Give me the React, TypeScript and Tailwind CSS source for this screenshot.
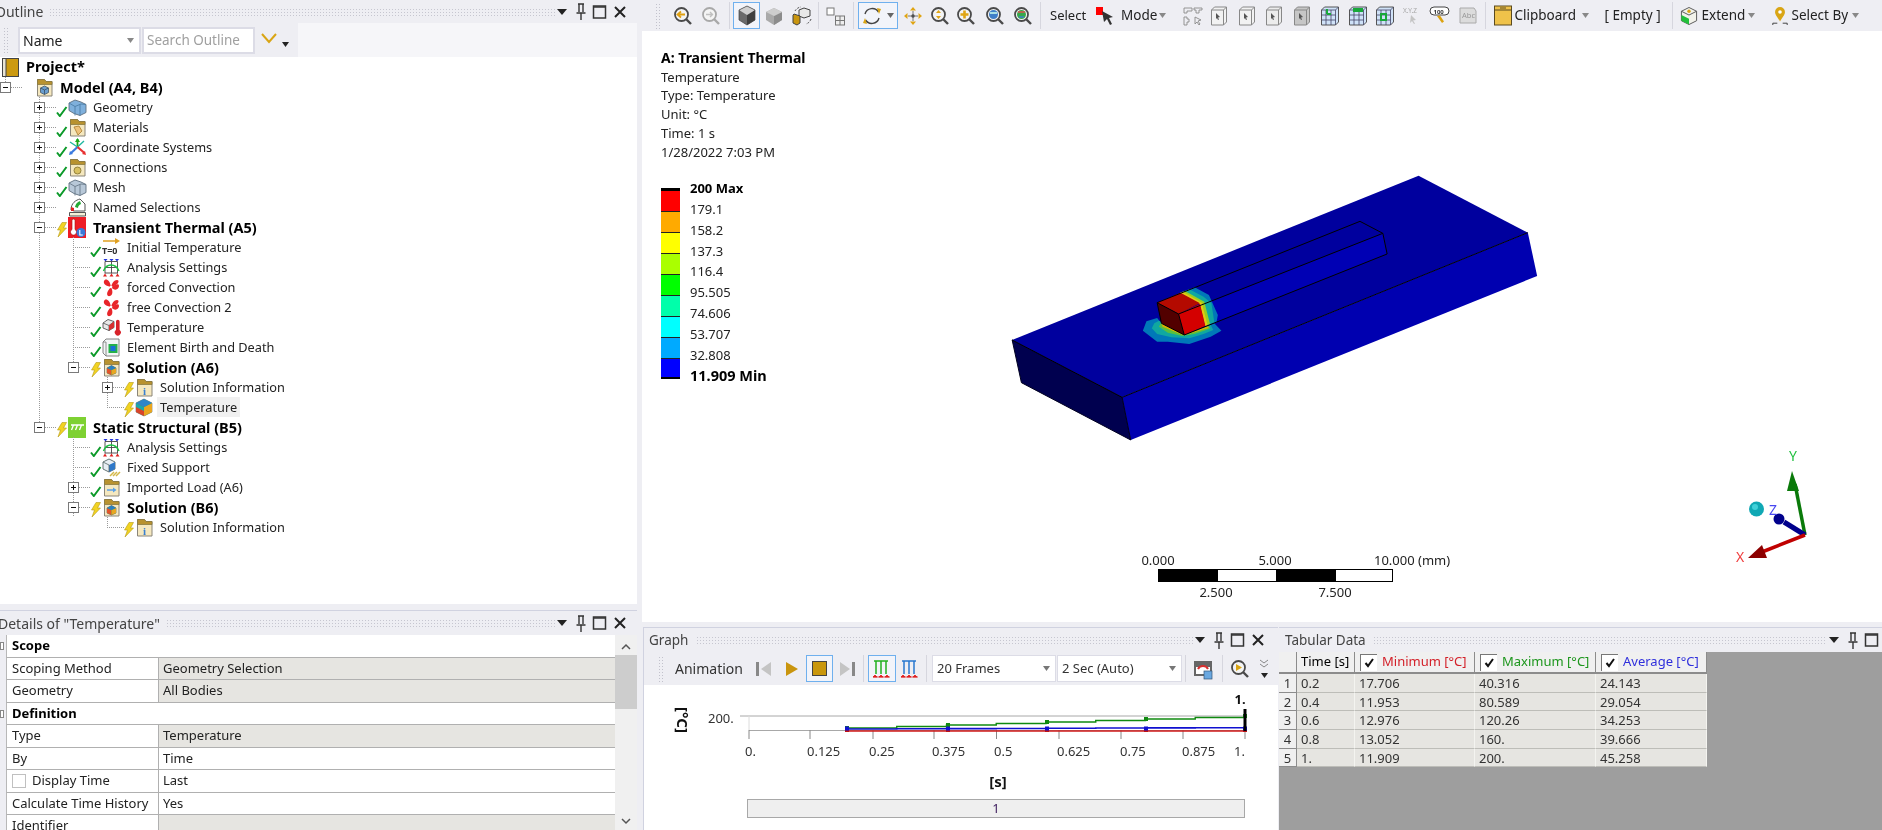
import React from "react";

type N = React.ReactNode;
const S = ({ w = 19, h = 19, children }: { w?: number; h?: number; children?: N }) => (
  <svg width={w} height={h} viewBox={`0 0 ${w} ${h}`} className="shrink-0 block">{children}</svg>
);

/* ---------- tree icons ---------- */
const Folder = ({ children }: { children?: N }) => (
  <S>
    <path d="M2.5 1.5h7l1.5 2h6v14.5h-14.5z" fill="#f5e8bf" stroke="#8a8578" strokeWidth="1" />
    <path d="M2.5 1.5h7l1.5 2h6v3h-14.5z" fill="#b8922f" stroke="#8a7a40" strokeWidth="0.8" />
    {children}
  </S>
);
const MiniCube = ({ c = "#6a9ecf" }: { c?: string }) => (
  <g>
    <path d="M5.5 10l4-2 4 2v4.5l-4 2-4-2z" fill={c} stroke="#456" strokeWidth="0.8" />
    <path d="M5.5 10l4 2 4-2M9.5 12v4.5" fill="none" stroke="#345" strokeWidth="0.7" />
  </g>
);
const SolCube = () => (
  <g>
    <path d="M5 10l4.5-2.5 4.5 2.5v5l-4.5 2-4.5-2z" fill="#2aa860" stroke="#555" strokeWidth="0.6" />
    <path d="M5 10l4.5 2v5l-4.5-2z" fill="#e2542a" />
    <path d="M9.5 12l4.5-2v5l-4.5 2z" fill="#e8a720" />
    <path d="M5 10l4.5-2.5 4.5 2.5-4.5 2z" fill="#2c7fc0" />
  </g>
);
const GeoCube = ({ c = "#7fb0dc", d = "#4d7fa8" }: { c?: string; d?: string }) => (
  <S>
    <path d="M1 5l6-3 6 2 5 2.500v8l-6 3-6-2-5-3z" fill={c} stroke="#5f6f7f" strokeWidth="0.9" />
    <path d="M1 5l6 3.500 6-2.500 5 .5M7 8.500v9M12 6.500v11" fill="none" stroke={d} strokeWidth="0.9" />
  </S>
);
const Grid = () => (
  <S>
    <path d="M1.500 1l2 2.500 2-2.500zM7.500 1l2 2.500 2-2.500zM13 1l2 2.500 2-2.500z" fill="#2233dd" />
    <path d="M3 3.500v12M9.500 3.500v12M15.500 3.500v12M3 3.500h12.500M3 9.500h12.500M3 15h12.500" stroke="#444" strokeWidth="0.9" fill="none" />
    <path d="M1.500 13c3-8 12-8 15.500 0" stroke="#18c040" strokeWidth="1.400" fill="none" />
    <path d="M1 18.500l2-3 2 3zM7.500 18.500l2-3 2 3zM13.500 18.500l2-3 2 3z" fill="#e02020" />
  </S>
);
const Fan = () => (
  <S>
    <path d="M9 9C4 8 1 6 2 3s6-2 7 6zM9 9c5-3 8-4 8-1s-4 6-8 1zM9 9c2 4 2 8-1 9s-5-3 1-9z" fill="#e8262a" />
    <path d="M9 9c1-4 3-7 6-7s2 5-6 7z" fill="#e8262a" />
    <circle cx="9" cy="9" r="1.300" fill="#fff" />
  </S>
);
const Tree: Record<string, () => N> = {
  model: () => <Folder><MiniCube /></Folder>,
  geo: () => <GeoCube />,
  mat: () => <Folder><path d="M6 9l5-1 3 5-4 4z" fill="#eec27a" stroke="#a87a2a" strokeWidth="0.8" /></Folder>,
  cs: () => (
    <S>
      <path d="M9.500 9V1" stroke="#1aa81a" strokeWidth="1.800" />
      <path d="M7 4l2.500-4L12 4z" fill="#1aa81a" />
      <path d="M9.500 9L2 4M9.500 9L16 3" stroke="#20b8a0" strokeWidth="1.400" />
      <path d="M9.500 9L3 15" stroke="#3a7ae0" strokeWidth="2.200" />
      <path d="M9.500 9l7 6" stroke="#e83030" strokeWidth="2.200" />
      <path d="M1 17l4-1-3-3z" fill="#3a7ae0" />
      <path d="M18 17l-4-1 3-3z" fill="#e83030" />
    </S>
  ),
  conn: () => <Folder><circle cx="9.500" cy="12.500" r="3.500" fill="#d8c060" stroke="#807030" strokeWidth="0.8" /></Folder>,
  mesh: () => <GeoCube c="#b8c8d8" d="#6a7a8a" />,
  named: () => (
    <S>
      <path d="M3 12C3 5 8 2 12 1l5 5v7H6z" fill="#fff" stroke="#555" strokeWidth="1" />
      <path d="M7 9c1-4 3-5 5-6l1 3c-2 1-3 2-3 4z" fill="#22aa33" />
      <path d="M3 9l3 1v3H3z" fill="#e02020" />
      <path d="M1.500 14.500h16v3.500h-16z" fill="#f4f0d8" stroke="#555" strokeWidth="1" />
    </S>
  ),
  thermal: () => (
    <S w={18} h={21}>
      <rect width="18" height="21" fill="#ee1c25" />
      <path d="M4 3.500a1.500 1.500 0 013 0v9a3 3 0 11-3 0z" fill="#fff" stroke="#a01010" strokeWidth="0.6" />
      <circle cx="13" cy="15.500" r="4.500" fill="#3a78d8" />
      <path d="M11.800 13v5h3" stroke="#fff" strokeWidth="1.100" fill="none" />
    </S>
  ),
  init: () => (
    <S>
      <path d="M1 3h14" stroke="#e0a020" strokeWidth="1.500" />
      <path d="M13 0l5 3-5 3z" fill="#e0a020" />
      <text x="0" y="16" fontSize="9" fontWeight="700" fill="#333">T=0</text>
    </S>
  ),
  grid: () => <Grid />,
  fan: () => <Fan />,
  tload: () => (
    <S>
      <path d="M1 5l5-3.500 6 2v6l-5 3-6-2.500z" fill="#e8e8e8" stroke="#555" strokeWidth="0.9" />
      <path d="M1 5l6 2.500 5-4M7 7.500v5.500" fill="none" stroke="#555" strokeWidth="0.8" />
      <path d="M7 7.500l5-4v6l-5 3z" fill="#d83030" />
      <path d="M14 3.500a1.800 1.800 0 013.600 0v8.500a3 3 0 11-3.600 0z" fill="#d8232a" />
    </S>
  ),
  ebd: () => (
    <S>
      <path d="M1 4l3-3h13v17H4L1 15z" fill="#f2f6f6" stroke="#777" strokeWidth="0.9" />
      <path d="M4 4V18M1 4h3" stroke="#777" strokeWidth="0.8" />
      <rect x="6.500" y="6" width="9" height="9" fill="#25b04a" />
      <rect x="8.500" y="8" width="5" height="5" fill="#1a70d8" />
    </S>
  ),
  sol: () => <Folder><SolCube /></Folder>,
  info: () => (
    <Folder>
      <text x="9.500" y="16.500" textAnchor="middle" fontSize="11" fontWeight="700" fontFamily="Liberation Serif, serif" fill="#3a80d0">i</text>
    </Folder>
  ),
  res: () => (
    <S>
      <path d="M1 5l8-4 8 4v9l-8 4-8-4z" fill="#2aa860" stroke="#666" strokeWidth="0.6" />
      <path d="M1 5l8 4v9l-8-4z" fill="#d8442a" />
      <path d="M1 5l8 4 0 4-8-4z" fill="#1aa8a8" />
      <path d="M9 9l8-4v9l-8 4z" fill="#eaa61e" />
      <path d="M1 5l8-4 8 4-8 4z" fill="#2f85c8" />
    </S>
  ),
  static: () => (
    <S w={18} h={21}>
      <rect width="18" height="21" fill="#7ed132" />
      <path d="M3 8h13M5.500 8l-2 5M9.500 8l-2 5M13.500 8l-2 5" stroke="#fff" strokeWidth="1.300" fill="none" />
    </S>
  ),
  fixed: () => (
    <S>
      <path d="M1 4l6-3 6 3v7l-6 3-6-3z" fill="#e8eef4" stroke="#566" strokeWidth="0.9" />
      <path d="M7 7l6-3v7l-6 3z" fill="#2f78c8" />
      <path d="M1 4l6 3v7" fill="none" stroke="#566" strokeWidth="0.8" />
      <path d="M8 18l4-4M11 18l4-4M14 18l4-4" stroke="#d4b848" strokeWidth="1.500" />
    </S>
  ),
  imp: () => <Folder><path d="M5 12h7" stroke="#5aa0e8" strokeWidth="1.500" /><path d="M11 9.500l3.500 2.500-3.500 2.500z" fill="#5aa0e8" /></Folder>,
};

const Check = () => (
  <svg width="12" height="20" viewBox="0 0 12 20" className="shrink-0 block">
    <path d="M1 15.500l2.800 3.500L10.500 10" fill="none" stroke="#0c9a2a" strokeWidth="2" />
  </svg>
);
const Bolt = () => (
  <svg width="12" height="20" viewBox="0 0 12 20" className="shrink-0 block">
    <path d="M6 5.500h4.500L7.500 11h3L2 20l2.500-7H1.500z" fill="#f2d322" stroke="#b59a18" strokeWidth="0.6" />
  </svg>
);

type RowD = {
  t: string; l: 1 | 2 | 3 | 4; b?: boolean; ex?: "+" | "-"; st?: "c" | "b"; ic: string;
  v: [number, number, number][]; hl?: boolean;
};
const F = 20; const H = 10;
const rows: RowD[] = [
  { t: "Model (A4, B4)", l: 1, b: true, ex: "-", ic: "model", v: [] },
  { t: "Geometry", l: 2, ex: "+", st: "c", ic: "geo", v: [[39, 0, F]] },
  { t: "Materials", l: 2, ex: "+", st: "c", ic: "model2", v: [[39, 0, F]] },
  { t: "Coordinate Systems", l: 2, ex: "+", st: "c", ic: "cs", v: [[39, 0, F]] },
  { t: "Connections", l: 2, ex: "+", st: "c", ic: "conn", v: [[39, 0, F]] },
  { t: "Mesh", l: 2, ex: "+", st: "c", ic: "mesh", v: [[39, 0, F]] },
  { t: "Named Selections", l: 2, ex: "+", ic: "named", v: [[39, 0, F]] },
  { t: "Transient Thermal (A5)", l: 2, b: true, ex: "-", st: "b", ic: "thermal", v: [[39, 0, F]] },
  { t: "Initial Temperature", l: 3, st: "c", ic: "init", v: [[39, 0, F], [73, 0, F]] },
  { t: "Analysis Settings", l: 3, st: "c", ic: "grid", v: [[39, 0, F], [73, 0, F]] },
  { t: "forced Convection", l: 3, st: "c", ic: "fan", v: [[39, 0, F], [73, 0, F]] },
  { t: "free Convection 2", l: 3, st: "c", ic: "fan", v: [[39, 0, F], [73, 0, F]] },
  { t: "Temperature", l: 3, st: "c", ic: "tload", v: [[39, 0, F], [73, 0, F]] },
  { t: "Element Birth and Death", l: 3, st: "c", ic: "ebd", v: [[39, 0, F], [73, 0, F]] },
  { t: "Solution (A6)", l: 3, b: true, ex: "-", st: "b", ic: "sol", v: [[39, 0, F], [73, 0, H]] },
  { t: "Solution Information", l: 4, ex: "+", st: "b", ic: "info", v: [[39, 0, F], [107, 0, F]] },
  { t: "Temperature", l: 4, st: "b", ic: "res", hl: true, v: [[39, 0, F], [107, 0, H]] },
  { t: "Static Structural (B5)", l: 2, b: true, ex: "-", st: "b", ic: "static", v: [[39, 0, H]] },
  { t: "Analysis Settings", l: 3, st: "c", ic: "grid", v: [[73, 0, F]] },
  { t: "Fixed Support", l: 3, st: "c", ic: "fixed", v: [[73, 0, F]] },
  { t: "Imported Load (A6)", l: 3, ex: "+", st: "c", ic: "imp", v: [[73, 0, F]] },
  { t: "Solution (B6)", l: 3, b: true, ex: "-", st: "b", ic: "sol", v: [[73, 0, F]] },
  { t: "Solution Information", l: 4, st: "b", ic: "info", v: [[107, 0, H]] },
];
const expX = { 1: 5, 2: 39, 3: 73, 4: 107 } as const;

const TreeRow = ({ r, idx }: { r: RowD; idx: number }) => {
  const x = expX[r.l];
  const pad = { 1: "pl-[23px]", 2: "pl-[56px]", 3: "pl-[90px]", 4: "pl-[123px]" }[r.l];
  const Icon = r.ic === "model2" ? Tree.mat : Tree[r.ic];
  return (
    <div className={`relative h-5 flex items-center ${pad}`} data-i={idx}>
      <svg width="200" height="20" className="absolute left-0 top-0" viewBox="0 0 200 20">
        {r.v.map(([vx, a, b], i) => (
          <line key={i} x1={vx + 0.5} x2={vx + 0.5} y1={a} y2={b} stroke="#9a9a9a" strokeDasharray="1 1" />
        ))}
        {r.l === 1 && <line x1={5.5} x2={5.5} y1={0} y2={10} stroke="#9a9a9a" strokeDasharray="1 1" />}
        <line x1={x} x2={x + 18} y1={10.5} y2={10.5} stroke="#9a9a9a" strokeDasharray="1 1" />
        {r.ex && (
          <g>
            <rect x={x - 4.5} y={5.5} width={10} height={10} fill="#fff" stroke="#7a7a7a" />
            <line x1={x - 2} x2={x + 3} y1={10.5} y2={10.5} stroke="#111" />
            {r.ex === "+" && <line x1={x + 0.5} x2={x + 0.5} y1={8} y2={13} stroke="#111" />}
          </g>
        )}
      </svg>
      <div className="relative w-[12px] shrink-0">{r.st === "c" ? <Check /> : r.st === "b" ? <Bolt /> : null}</div>
      <div className="relative shrink-0 w-[19px]">{Icon()}</div>
      <span
        className={`relative ml-[3px] pl-[3px] pr-[3px] h-5 leading-5 whitespace-nowrap ${r.b ? "text-[14.500px] font-bold text-black" : "text-[12.750px] text-[#222]"} ${r.hl ? "bg-[#f0f0f0]" : ""}`}
      >
        {r.t}
      </span>
    </div>
  );
};

/* ---------- panel chrome ---------- */
const GripH = ({ className }: { className: string }) => (
  <div className={`h-[8px] bg-[radial-gradient(#c6c6d0_0.8px,transparent_0.9px)] bg-[length:3px_3px] ${className}`} />
);
const GripV = ({ className = "" }: { className?: string }) => (
  <div className={`w-[6px] h-[26px] shrink-0 bg-[radial-gradient(#c2c2cc_0.8px,transparent_0.9px)] bg-[length:3px_3px] ${className}`} />
);
const Ctl = ({ clip = false }: { clip?: boolean }) => (
  <div className="flex items-center shrink-0">
    <svg width="12" height="8" viewBox="0 0 12 8"><path d="M1 1h10L6 7z" fill="#222" /></svg>
    <svg className="ml-[6px]" width="14" height="17" viewBox="0 0 14 17"><path d="M4 1h6M5 1v8M9 1v8M2.500 10h9M7 10v7" stroke="#333" strokeWidth="1.400" fill="none" /></svg>
    <svg className="ml-[4px]" width="16" height="16" viewBox="0 0 16 16"><rect x="1.500" y="2" width="12" height="12" fill="none" stroke="#333" strokeWidth="1.500" /><path d="M1.500 3h12" stroke="#333" strokeWidth="1.500" /></svg>
    {!clip && <svg className="ml-[5px]" width="14" height="14" viewBox="0 0 14 14"><path d="M2 2l10 10M12 2L2 12" stroke="#222" strokeWidth="2" /></svg>}
  </div>
);
const Arrow = ({ className = "", c = "#666" }: { className?: string; c?: string }) => (
  <svg className={`shrink-0 ${className}`} width="7" height="5" viewBox="0 0 7 5"><path d="M0 0h7L3.500 5z" fill={c} /></svg>
);

/* ---------- toolbar icons ---------- */
const Mag = ({ dis, children }: { dis?: boolean; children?: N }) => (
  <svg width="20" height="20" viewBox="0 0 20 20" className="block">
    <circle cx="8.500" cy="8.500" r="6.500" fill="#f4f4f4" stroke={dis ? "#a8a8a8" : "#4a4a4a"} strokeWidth="1.800" />
    <path d="M13 13l5 5" stroke={dis ? "#a8a8a8" : "#4a4a4a"} strokeWidth="2.400" />
    {children}
  </svg>
);
const T = ({ w, className = "", children }: { w: string; className?: string; children?: N }) => (
  <div className={`flex items-center justify-center shrink-0 h-[26px] ${w} ${className}`}>{children}</div>
);
const Sep = ({ className = "" }: { className?: string }) => <div className={`w-px h-[27px] shrink-0 bg-[#d6d6de] ${className}`} />;
const Iso = ({ c = "#8a8a8a", dark = "#5a5a5a" }: { c?: string; dark?: string }) => (
  <svg width="20" height="21" viewBox="0 0 20 21" className="block">
    <path d="M10 1l8 4v10l-8 5-8-5V5z" fill={c} />
    <path d="M10 10l8-5v10l-8 5z" fill={dark} />
    <path d="M2 5l8 5 8-5-8-4z" fill="#cfcfcf" />
    <path d="M10 1l8 4v10l-8 5-8-5V5z" fill="none" stroke="#444" strokeWidth="0.7" />
  </svg>
);
const BoxCur = ({ f = "#f2f2f2" }: { f?: string }) => (
  <svg width="20" height="20" viewBox="0 0 20 20" className="block">
    <path d="M1.500 4l3-3h12v15l-3 3H1.500z" fill={f} stroke="#888" />
    <path d="M1.500 4h12v15M13.500 4l3-3" fill="none" stroke="#888" />
    <path d="M6 7l4 4-2 .5 1 2-1 .5-1-2-1 1z" fill="#555" />
  </svg>
);
const GridBox = ({ g }: { g: string }) => (
  <svg width="20" height="20" viewBox="0 0 20 20" className="block">
    <path d="M1.500 4l3-3h14v15l-3 3H1.500z" fill="#cfe2f8" stroke="#555" />
    <path d="M1.500 4h14v15M15.500 4l3-3M6 4v15M11 4v15M1.500 9h14M1.500 14h14" fill="none" stroke="#446" strokeWidth="0.8" />
    <path d={g} fill="none" stroke="#18a83a" strokeWidth="2" />
  </svg>
);
const Sel1 = () => (
  <svg width="20" height="20" viewBox="0 0 20 20" className="block">
    <g fill="none" stroke="#8a8a8a" strokeWidth="0.9">
      <path d="M1 2h8v3H4v2H1zM11 2h8v2h-3v3h-3V4h-2zM1 11h3v2h2v3H4v3H1zM12 11l6 3-3 1 2 3-1 1-2-3-2 2z" />
    </g>
  </svg>
);

const TopBar = () => (
  <div className="h-[31px] flex items-center bg-[#eeeef3] text-[13px] text-[#222] whitespace-nowrap pl-[13px]">
    <GripV />
    <T w="w-[28px]" className="ml-[8px]">
      <Mag><path d="M12 8.500H5M8 5.500l-3.500 3 3.500 3" stroke="#e0a010" strokeWidth="1.800" fill="none" /></Mag>
    </T>
    <T w="w-[28px]"><Mag dis><path d="M5 8.500h6M9 6l2.500 2.500L9 11" stroke="#c0c0c0" strokeWidth="1.400" fill="none" /></Mag></T>
    <Sep className="ml-[4px]" />
    <T w="w-[27px]" className="ml-[3px] border-[1.500px] border-[#6fb0ee] bg-[#f2f4fa] !h-[27px]"><Iso c="#6a6a6a" dark="#3f3f3f" /></T>
    <T w="w-[28px]"><svg width="18" height="18" viewBox="0 0 18 18"><path d="M9 1l8 4v8l-8 5-8-5V5z" fill="#a9a9a9" /><path d="M9 9l8-4v8l-8 5z" fill="#8c8c8c" /><path d="M1 5l8 4 8-4-8-4z" fill="#cdcdcd" /></svg></T>
    <T w="w-[28px]">
      <svg width="20" height="20" viewBox="0 0 20 20">
        <path d="M12 2l6 2v6l-6 2-5-2V4z" fill="#e8e8e8" stroke="#444" />
        <path d="M2 8l6 2v7l-3 2-4-2V9z" fill="#c9950e" stroke="#444" />
        <path d="M3 5A8 8 0 019 1M19 13a8 8 0 01-5 5" stroke="#444" fill="none" strokeDasharray="2 1.500" />
      </svg>
    </T>
    <Sep className="ml-[2px]" />
    <T w="w-[28px]" className="ml-[3px]">
      <svg width="20" height="20" viewBox="0 0 20 20">
        <rect x="1" y="2" width="7" height="7" fill="#fff" stroke="#777" />
        <rect x="9.500" y="10" width="9" height="9" fill="#eee" stroke="#777" />
        <path d="M14 10v9M9.500 14.500h9" stroke="#777" />
      </svg>
    </T>
    <Sep className="ml-[3px]" />
    <T w="w-[40px]" className="ml-[4px] border-[1.500px] border-[#6fb0ee] bg-[#f2f4fa] !h-[27px] justify-start pl-[3px]">
      <svg width="20" height="20" viewBox="0 0 20 20">
        <path d="M3 8A7.500 7.500 0 0116.500 6M17 12A7.500 7.500 0 013.500 14" fill="none" stroke="#444" strokeWidth="1.400" />
        <path d="M15 2l4 1-2 5zM5 18l-4-1 2-5z" fill="#d9a514" />
      </svg>
      <Arrow className="ml-[5px]" />
    </T>
    <T w="w-[26px]" className="ml-[2px]">
      <svg width="20" height="20" viewBox="0 0 20 20">
        <path d="M10 1l3 3.500H7zM10 19l3-3.500H7zM1 10l3.500-3v6zM19 10l-3.500-3v6z" fill="#e0a514" />
        <circle cx="10" cy="10" r="1.700" fill="#444" />
        <path d="M10 5v10M5 10h10" stroke="#555" strokeWidth="0.8" />
      </svg>
    </T>
    <T w="w-[26px]" className="ml-px"><Mag><path d="M8.500 4l2.500 3H6zM8.500 13L6 10h5z" fill="#e0a514" /></Mag></T>
    <T w="w-[26px]"><Mag><path d="M8.500 4.500v8M4.500 8.500h8" stroke="#e0a514" strokeWidth="2.600" /></Mag></T>
    <T w="w-[28px]" className="ml-[2px]"><Mag><circle cx="8.500" cy="8.500" r="4.500" fill="#3f7fc8" /><path d="M5 7h7" stroke="#cfe" strokeWidth="1.500" /></Mag></T>
    <T w="w-[28px]"><Mag><circle cx="8.500" cy="8.500" r="4.500" fill="#36a84a" /><path d="M5 6h7" stroke="#e05050" strokeWidth="1.500" /><path d="M6 11h5" stroke="#3f7fc8" strokeWidth="1.500" /></Mag></T>
    <Sep className="ml-[3px]" />
    <span className="ml-[9px] w-[38px]">Select</span>
    <T w="w-[24px]" className="ml-[6px]">
      <svg width="22" height="22" viewBox="0 0 22 22">
        <rect x="1" y="2" width="7" height="8" fill="#f00" />
        <path d="M7 6l11 6-4 1 3 6-2 1-3-6-3 3z" fill="#333" />
      </svg>
    </T>
    <span className="ml-[3px] w-[37px] text-[13.500px]">Mode</span>
    <Arrow className="ml-[1px]" c="#888" />
    <T w="w-[27.500px]" className="ml-[13px]"><Sel1 /></T>
    <T w="w-[27.500px]"><BoxCur /></T>
    <T w="w-[27.500px]"><BoxCur /></T>
    <T w="w-[27.500px]"><BoxCur f="#ececec" /></T>
    <T w="w-[27.500px]"><BoxCur f="#c6c6c6" /></T>
    <T w="w-[27.500px]"><GridBox g="M7 3v5M7 8h4" /></T>
    <T w="w-[27.500px]"><GridBox g="M5 3h10M5 5h10" /></T>
    <T w="w-[27.500px]"><GridBox g="M6 8h5v6H6z" /></T>
    <T w="w-[27.500px]">
      <svg width="22" height="20" viewBox="0 0 22 20">
        <text x="1" y="7" fontSize="6.500" fill="#a8a8a8">X.Y.Z</text>
        <path d="M9 9l5 5-3 .5 2 3-1 .5-2-3-2 2z" fill="#c4c4c4" />
      </svg>
    </T>
    <T w="w-[27.500px]">
      <svg width="22" height="20" viewBox="0 0 22 20">
        <rect x="1" y="1" width="19" height="8" rx="4" fill="#fff" stroke="#444" />
        <text x="4.500" y="7.500" fontSize="6" fontWeight="700" fill="#333">100</text>
        <path d="M8 10l5 7 2-1.500-4-6z" fill="#dca20f" />
      </svg>
    </T>
    <T w="w-[27.500px]">
      <svg width="20" height="20" viewBox="0 0 20 20">
        <path d="M2 2h14l2 3v12H2z" fill="#dcdcdc" stroke="#aaa" />
        <text x="4" y="12" fontSize="7.500" fill="#999">Abc</text>
      </svg>
    </T>
    <Sep className="ml-[3px]" />
    <T w="w-[18px]" className="ml-[8px]">
      <svg width="18" height="21" viewBox="0 0 18 21">
        <rect x="0.500" y="1" width="17" height="19" fill="#efc24a" stroke="#5a4a20" />
        <path d="M0.500 5h17M6 3h6" stroke="#5a4a20" />
      </svg>
    </T>
    <span className="ml-[3px] w-[64px] text-[13.500px]">Clipboard</span>
    <Arrow className="ml-[3px]" c="#888" />
    <span className="ml-[16px] w-[59px] text-[13.500px]">[ Empty ]</span>
    <Sep className="ml-[8px]" />
    <T w="w-[18px]" className="ml-[7px]">
      <svg width="19" height="20" viewBox="0 0 19 20">
        <path d="M9.500 1l8 4v10l-8 4-8-4V5z" fill="#f2f2ea" stroke="#555" />
        <path d="M1.500 9l8 4v6l-8-4z" fill="#22c03a" />
        <path d="M1.500 5l8 4 8-4" fill="none" stroke="#555" />
        <circle cx="9.500" cy="5" r="1.800" fill="#d9a514" />
      </svg>
    </T>
    <span className="ml-[4px] w-[43px] text-[13.500px]">Extend</span>
    <Arrow className="ml-[3px]" c="#888" />
    <T w="w-[18px]" className="ml-[16px]">
      <svg width="20" height="22" viewBox="0 0 20 22">
        <path d="M10 1a5.500 5.500 0 015.500 5.500C15.500 10 12 13 10 17c-2-4-5.500-7-5.500-10.500A5.500 5.500 0 0110 1z" fill="#d9a514" />
        <circle cx="10" cy="6.500" r="2" fill="#fff" />
        <path d="M2 21v-2h5M18 21v-2h-5" stroke="#333" fill="none" />
      </svg>
    </T>
    <span className="ml-[3px] w-[58px] text-[13.500px]">Select By</span>
    <Arrow className="ml-[2px]" c="#888" />
  </div>
);

/* ---------- viewport ---------- */
const legend = ["#ff0000", "#ffaa00", "#ffff00", "#aaff00", "#00ff00", "#00ffaa", "#00ffff", "#00aaff", "#0000ff"];
const labels = ["179.1", "158.2", "137.3", "116.4", "95.505", "74.606", "53.707", "32.808"];

const Model3D = () => (
  <svg className="absolute left-0 top-0 block" width="1240" height="591" viewBox="642 31 1240 591">
    <g transform="translate(1000 160) scale(0.35714 0.33333)" strokeLinejoin="round">
      <path d="M34 540L342 712L366 840L60 668Z" fill="#00004f" stroke="#000020" vectorEffect="non-scaling-stroke" />
      <path d="M342 712L1478 218L1504 348L366 840Z" fill="#0000b0" />
      <path d="M34 540L1172 47L1478 218L342 712Z" fill="#00009e" />
      <path d="M34 540L342 712L1478 218" fill="none" stroke="#000" vectorEffect="non-scaling-stroke" />
      <path d="M342 712L366 840" fill="none" stroke="#000020" vectorEffect="non-scaling-stroke" />
      {/* rib */}
      <path d="M500 462L1072 220L1084 282L516 525Z" fill="#0000b4" />
      <path d="M440 428L1008 184L1072 220L500 462Z" fill="#00009e" />
      {/* halo */}
      <path d="M400 512L410 484L440 474L452 490L516 525L600 490L620 512L590 530L530 552L470 545L440 545Z" fill="#0078b8" />
      <path d="M425 505L432 490L445 482L516 525L590 495L597 510L570 522L530 535L480 532L440 522Z" fill="#10a8a0" />
      <path d="M445 500L450 490L516 525L585 497L588 506L545 522L510 528L470 518Z" fill="#58c040" />
      <path d="M455 500L452 490L516 525L582 499L584 504L540 518L510 524Z" fill="#d8b000" />
      {/* bands on rib */}
      <path d="M505 398L545 382L585 405L610 465L606 488L575 498L560 433Z" fill="#0078b8" />
      <path d="M505 398L530 388L570 410L592 430L600 487L575 498L560 433Z" fill="#10a8a0" />
      <path d="M505 398L518 393L572 425L588 492L575 498L560 433Z" fill="#98d020" />
      <path d="M505 398L511 395L565 428L581 495L575 498L560 433Z" fill="#e8c810" />
      {/* hot cube */}
      <path d="M440 428L505 398L560 430L500 462Z" fill="#b40a00" />
      <path d="M440 428L500 462L516 525L452 490Z" fill="#520000" />
      <path d="M500 462L560 432L575 498L516 525Z" fill="#d40000" />
      <path d="M440 428L1008 184L1072 220L500 462ZM500 462L516 525L452 490L440 428M516 525L1084 282L1072 220" fill="none" stroke="#000" vectorEffect="non-scaling-stroke" />
    </g>
    {/* triad */}
    <g>
      <path d="M1805 535L1795 484" stroke="#0a7a0a" strokeWidth="3.500" />
      <path d="M1792 471L1799 491L1787 491Z" fill="#0a7a0a" />
      <path d="M1805 535L1784 522" stroke="#00008c" strokeWidth="5" />
      <circle cx="1779" cy="519" r="5.500" fill="#00008c" />
      <path d="M1805 535L1762 552" stroke="#c00000" strokeWidth="3.500" />
      <path d="M1748 558L1762 545L1767 558Z" fill="#8c0000" />
      <circle cx="1756.500" cy="509" r="7.500" fill="#10a8b4" />
      <circle cx="1755" cy="507" r="3" fill="#40d0d8" />
      <text x="1793" y="461" textAnchor="middle" fontSize="14" fill="#22c040">Y</text>
      <text x="1773" y="515" textAnchor="middle" fontSize="14" fill="#4848f0">Z</text>
      <text x="1740" y="562" textAnchor="middle" fontSize="14" fill="#f04040">X</text>
    </g>
  </svg>
);

const ScaleBar = () => (
  <div className="absolute left-[516px] top-[521px] w-[235px] text-[13px] text-[#222] leading-[17px]">
    <div className="relative h-[17px] whitespace-nowrap">
      <span className="absolute left-0 -translate-x-1/2">0.000</span>
      <span className="absolute left-[117px] -translate-x-1/2">5.000</span>
      <span className="absolute left-[216px]">10.000 (mm)</span>
    </div>
    <div className="flex h-[13px] border border-black">
      <div className="w-[59px] bg-black" />
      <div className="w-[58px] bg-white" />
      <div className="w-[60px] bg-black" />
      <div className="flex-1 bg-white" />
    </div>
    <div className="relative h-[17px] mt-[2px]">
      <span className="absolute left-[58px] -translate-x-1/2">2.500</span>
      <span className="absolute left-[177px] -translate-x-1/2">7.500</span>
    </div>
  </div>
);

const Viewport = () => (
  <div className="relative h-[591px] bg-white overflow-hidden text-[13px] text-[#222] pl-[19px] pt-[18px]">
    <Model3D />
    <div className="relative leading-[18.700px]">
      <div className="font-bold text-black text-[14px]">A: Transient Thermal</div>
      <div>Temperature</div>
      <div>Type: Temperature</div>
      <div>Unit: °C</div>
      <div>Time: 1 s</div>
      <div>1/28/2022 7:03 PM</div>
    </div>
    <div className="relative flex mt-[17px]">
      <div className="w-[19px] mt-[10px] shrink-0">
        <div className="h-[3px] bg-black" />
        {legend.map((c) => (
          <div key={c} className="h-[21px] border-b border-[#222] last:h-[20px] last:border-b-[2px] last:border-black" style={{ background: c }} />
        ))}
      </div>
      <div className="ml-[10px] leading-[20.800px]">
        <div className="font-bold text-black">200 Max</div>
        {labels.map((t) => <div key={t}>{t}</div>)}
        <div className="font-bold text-black text-[14.500px]">11.909 Min</div>
      </div>
    </div>
    <ScaleBar />
  </div>
);

/* ---------- details ---------- */
type DR = { a: string; b?: string; g?: boolean; ro?: boolean; cb?: boolean };
const det: DR[] = [
  { a: "Scope", g: true },
  { a: "Scoping Method", b: "Geometry Selection", ro: true },
  { a: "Geometry", b: "All Bodies", ro: true },
  { a: "Definition", g: true },
  { a: "Type", b: "Temperature", ro: true },
  { a: "By", b: "Time" },
  { a: "Display Time", b: "Last", cb: true },
  { a: "Calculate Time History", b: "Yes" },
  { a: "Identifier", b: "", ro: true },
];

const Details = () => (
  <div className="flex-1 min-h-0 flex flex-col overflow-hidden">
    <div className="h-[25px] mt-[6px] border-t border-[#d0d2e0] bg-[#eeeef3] flex items-center text-[14px] text-[#444] whitespace-nowrap pr-[10px]">
      <span className="-ml-[2px]">Details of "Temperature"</span>
      <GripH className="ml-[6px] flex-1" />
      <Ctl />
    </div>
    <div className="flex flex-1 min-h-0 text-[13px] text-[#222]">
      <div className="w-[615px] shrink-0 pl-[6px] bg-[#eeeef3] relative">
        {det.map((r) => (
          <div key={r.a} className="relative flex h-[22.500px] leading-[21px] border-b-[1.500px] border-[#b0b0b0] border-l border-l-[#b8b8b8] bg-white whitespace-nowrap">
            {r.g ? (
              <>
                <div className="absolute -left-[7px] top-[7px] w-[4px] h-[8px] bg-white border border-[#888]" />
                <div className="pl-[5px] font-bold text-black">{r.a}</div>
              </>
            ) : (
              <>
                <div className="w-[152px] shrink-0 pl-[5px] border-r-[1.500px] border-[#b0b0b0] flex items-center h-full">
                  {r.cb && <div className="w-[14px] h-[14px] bg-white border border-[#c0c0c0] mr-[6px]" />}
                  {r.a}
                </div>
                <div className={`flex-1 pl-[4px] ${r.ro ? "bg-[#e6e5e1]" : ""}`}>{r.b}</div>
              </>
            )}
          </div>
        ))}
      </div>
      <div className="flex-1 bg-[#f0f0f0] flex flex-col items-center relative">
        <svg className="mt-[8px]" width="10" height="7" viewBox="0 0 10 7"><path d="M1 6l4-4 4 4" fill="none" stroke="#555" strokeWidth="1.500" /></svg>
        <div className="w-full h-[54px] mt-[5px] bg-[#cdcdcd]" />
        <div className="flex-1" />
        <svg className="mb-[5px]" width="10" height="7" viewBox="0 0 10 7"><path d="M1 1l4 4 4-4" fill="none" stroke="#555" strokeWidth="1.500" /></svg>
      </div>
    </div>
  </div>
);

/* ---------- graph ---------- */
const ticks = [748, 809, 872, 933, 995.5, 1058, 1120, 1182, 1244];
const tickL: [string, number][] = [["0.", 744], ["0.125", 806], ["0.25", 868], ["0.375", 931], ["0.5", 993], ["0.625", 1056], ["0.75", 1119], ["0.875", 1181], ["1.", 1233]];
const marks = [846, 947, 1046, 1145, 1244];
const step = (a: number, b: number) => {
  let d = `M846 ${a}`;
  const n = 8;
  for (let i = 1; i <= n; i++) {
    const x = 846 + ((1244 - 846) * i) / n;
    const y = a + ((b - a) * i) / n;
    d += `H${x}V${y}`;
  }
  return d;
};

const AnimCombo = ({ t, w }: { t: string; w: string }) => (
  <div className={`h-[27px] bg-white border border-[#dcdce6] flex items-center justify-between pl-[4px] pr-[5px] shrink-0 ${w}`}>
    <span>{t}</span>
    <Arrow c="#777" />
  </div>
);

const Graph = () => (
  <div className="w-[635px] ml-px shrink-0 flex flex-col border-t border-l border-[#d0d2e0] text-[13px] text-[#333]">
    <div className="h-[24px] bg-[#eeeef3] flex items-center pl-[5px] pr-[13px] text-[#444]">
      <span className="text-[13.500px]">Graph</span>
      <GripH className="ml-[8px] flex-1" />
      <Ctl />
    </div>
    <div className="h-[33px] bg-[#eeeef3] flex items-center pl-[14px] whitespace-nowrap">
      <GripV />
      <span className="ml-[11px] w-[70px] text-[14px]">Animation</span>
      <svg className="ml-[10px]" width="16" height="16" viewBox="0 0 16 16"><rect x="1" y="1" width="3" height="14" fill="#888" /><path d="M16 1v14L6 8z" fill="#c4c4c4" /></svg>
      <svg className="ml-[14px]" width="14" height="16" viewBox="0 0 14 16"><path d="M1 1l12 7-12 7z" fill="#c9950e" /></svg>
      <div className="ml-[7px] w-[27px] h-[27px] border-[1.500px] border-[#6fb0ee] bg-[#f2f4fa] flex items-center justify-center shrink-0">
        <div className="w-[15px] h-[15px] bg-[#c9970d] border border-[#444]" />
      </div>
      <svg className="ml-[7px]" width="16" height="16" viewBox="0 0 16 16"><path d="M0 1v14l10-7z" fill="#c4c4c4" /><rect x="12" y="1" width="3" height="14" fill="#888" /></svg>
      <Sep className="ml-[7px]" />
      <div className="ml-[4px] w-[28px] h-[27px] border-[1.500px] border-[#6fb0ee] bg-[#f2f4fa] flex items-center justify-center shrink-0">
        <svg width="20" height="20" viewBox="0 0 20 20"><path d="M2 2h14M4 2v13M9 2v13M14 2v13" stroke="#22b020" strokeWidth="1.500" fill="none" /><path d="M1 18l2-2 2 2zM7 18l2-2 2 2zM13 18l2-2 2 2z M1 18h17" fill="#e02020" stroke="#e02020" strokeWidth="0.8" /></svg>
      </div>
      <div className="ml-[4px] w-[20px] flex justify-center shrink-0">
        <svg width="20" height="20" viewBox="0 0 20 20"><path d="M2 2h14M4 2v13M9 2v13M14 2v13" stroke="#2878d0" strokeWidth="1.500" fill="none" /><path d="M1 18l2-2 2 2zM7 18l2-2 2 2zM13 18l2-2 2 2z M1 18h17" fill="#e02020" stroke="#e02020" strokeWidth="0.8" /></svg>
      </div>
      <Sep className="ml-[6px]" />
      <AnimCombo t="20 Frames" w="ml-[5px] w-[124px]" />
      <AnimCombo t="2 Sec (Auto)" w="ml-px w-[125px]" />
      <Sep className="ml-[3px]" />
      <div className="ml-[7px] w-[22px] shrink-0">
        <svg width="20" height="22" viewBox="0 0 20 22"><rect x="1" y="3" width="18" height="15" fill="#666" /><path d="M3 9h14v7H3z" fill="#fff" /><path d="M5 11c2-4 8-4 10 0" stroke="#d83030" strokeWidth="2" fill="none" /><rect x="11" y="13" width="8" height="8" fill="#6aa8e0" stroke="#357" strokeWidth="0.7" /></svg>
      </div>
      <Sep className="ml-[7px]" />
      <div className="ml-[7px] shrink-0">
        <Mag><path d="M6 5l6 3.500L6 12z" fill="#d9a514" /></Mag>
      </div>
      <div className="ml-[9px] flex flex-col items-center gap-[5px] shrink-0">
        <svg width="10" height="9" viewBox="0 0 10 9"><path d="M1 1l4 3 4-3M1 5l4 3 4-3" fill="none" stroke="#888" /></svg>
        <Arrow c="#222" />
      </div>
    </div>
    <div className="flex-1 bg-white">
      <svg className="block" width="634" height="111" viewBox="643 685 634 111">
        <line x1="739" x2="1244" y1="716" y2="716" stroke="#a8a8a8" />
        <line x1="748" x2="748" y1="716" y2="730" stroke="#dcdcdc" />
        <line x1="748" x2="1244" y1="730.500" y2="730.500" stroke="#a8a8a8" />
        {ticks.map((x) => <line key={x} x1={x} x2={x} y1={730} y2={739} stroke="#888" />)}
        <path d={step(728, 716)} fill="none" stroke="#108a10" strokeWidth="1.400" />
        <line x1="846" x2="1244" y1="731" y2="731" stroke="#d01818" strokeWidth="1.400" />
        <path d={step(729, 727.500)} fill="none" stroke="#1010d0" strokeWidth="1.600" />
        {marks.map((x, i) => (
          <g key={x}>
            <rect x={x - 2} y={[726, 723, 720, 717, 714][i]} width="4" height="4" fill="#108a10" />
            <rect x={x - 2} y="729" width="4" height="3" fill="#c01010" />
            <rect x={x - 2} y="726.500" width="4" height="4" fill="#1010d0" />
          </g>
        ))}
        <line x1="1244" x2="1244" y1="709" y2="731" stroke="#000" strokeWidth="3" />
        <text x="1239" y="704" fontSize="13" fontWeight="700" textAnchor="middle" fill="#111">1.</text>
        <text x="707" y="723" fontSize="13" fill="#333">200.</text>
        {tickL.map(([t, x]) => <text key={t} x={x} y={756} fontSize="13" fill="#333">{t}</text>)}
        <text x="997" y="787" fontSize="15" fontWeight="700" textAnchor="middle" fill="#111">[s]</text>
        <text transform="translate(676 720) rotate(90)" fontSize="15" fontWeight="700" textAnchor="middle" fill="#111">[°C]</text>
      </svg>
      <div className="ml-[103px] mt-[3px] w-[498px] h-[19px] bg-[#efefef] border border-[#a8a8a8] flex items-center justify-center text-[#402060] text-[13px]">1</div>
    </div>
  </div>
);

/* ---------- tabular ---------- */
const Chk = () => (
  <div className="w-[17px] h-[17px] bg-white border-l-[1.500px] border-t-[1.500px] border-[#777] flex items-center justify-center shrink-0">
    <svg width="11" height="10" viewBox="0 0 11 10"><path d="M1.500 5l2.500 3 5-7" fill="none" stroke="#111" strokeWidth="2" /></svg>
  </div>
);
const tab = [
  ["1", "0.2", "17.706", "40.316", "24.143"],
  ["2", "0.4", "11.953", "80.589", "29.054"],
  ["3", "0.6", "12.976", "120.26", "34.253"],
  ["4", "0.8", "13.052", "160.", "39.666"],
  ["5", "1.", "11.909", "200.", "45.258"],
];
const headCell = "h-[22px] bg-[#f0f0f0] border-r-[1.500px] border-b-[2px] border-[#8c8c8c] flex items-center whitespace-nowrap";

const Tabular = () => (
  <div className="flex-1 min-w-0 ml-[1px] flex flex-col text-[13px] text-[#333] overflow-hidden">
    <div className="h-[25px] bg-[#eeeef3] border-t border-[#d0d2e0] flex items-center pl-[6px] text-[#444] whitespace-nowrap">
      <span className="text-[13.500px]">Tabular Data</span>
      <GripH className="ml-[7px] flex-1" />
      <div className="w-[54px] overflow-hidden ml-[2px]"><Ctl clip /></div>
    </div>
    <div className="flex-1 bg-[#9e9e9e]">
      <div className="grid grid-cols-[18px_58px_120px_121px_111px] w-[428px]">
        <div className={headCell} />
        <div className={`${headCell} pl-[4px] text-black`}>Time [s]</div>
        <div className={`${headCell} pl-[5px]`}><Chk /><span className="ml-[5px] text-[#d32029]">Minimum [°C]</span></div>
        <div className={`${headCell} pl-[5px]`}><Chk /><span className="ml-[5px] text-[#1d961d]">Maximum [°C]</span></div>
        <div className={`${headCell} pl-[5px] border-r-0`}><Chk /><span className="ml-[5px] text-[#2f2fdc]">Average [°C]</span></div>
        {tab.map((r) => r.map((c, i) => (
          <div
            key={r[0] + i}
            className={`h-[18.700px] leading-[18px] border-b-[1.500px] border-[#bdbdb8] whitespace-nowrap ${i === 0 ? "bg-[#f0f0f0] text-center border-r-[1.500px] border-r-[#8c8c8c] border-b-[#8c8c8c]" : "bg-[#e6e5e1] pl-[4px] border-r-[1.500px] border-r-[#f4f4f0]"}`}
          >
            {c}
          </div>
        )))}
      </div>
    </div>
  </div>
);

export default function App() {
  return (
    <div className="w-[1882px] h-[830px] flex overflow-hidden bg-[#eeeef3] font-['Noto_Sans',sans-serif] blur-[0.5px]">
      <div className="w-[637px] shrink-0 flex flex-col h-full overflow-hidden">
        <div className="h-[604px] shrink-0 flex flex-col bg-white">
          <div className="h-[23px] bg-[#eeeef3] flex items-center text-[14px] text-[#444] whitespace-nowrap pr-[10px]">
            <span className="-ml-[5px]">Outline</span>
            <GripH className="ml-[6px] flex-1" />
            <Ctl />
          </div>
          <div className="h-[34px] bg-[#f6f6f9]">
            <div className="h-[34px] w-[298px] bg-[#eeeef3] flex items-center pl-[3px] whitespace-nowrap">
              <GripV />
              <div className="ml-[9px] w-[123px] h-[27px] bg-white border-2 border-[#dcdce6] flex items-center justify-between pl-[3px] pr-[5px] text-[#222] text-[14px]">
                Name
                <Arrow c="#888" />
              </div>
              <div className="ml-[1px] w-[113px] h-[27px] bg-white border-2 border-[#dcdce6] flex items-center pl-[3px] text-[#a0a0a0] text-[13.500px]">Search Outline</div>
              <svg className="ml-[6px] -mt-[3px]" width="16" height="11" viewBox="0 0 16 11"><path d="M1 1l7 8 7-8" fill="none" stroke="#d9a514" strokeWidth="2" /></svg>
              <Arrow c="#222" className="ml-[5px] mt-[9px]" />
            </div>
          </div>
          <div className="flex-1">
            <div className="relative h-5 flex items-center">
              <svg className="block ml-[2px] shrink-0" width="17" height="19" viewBox="0 0 17 19">
                <rect x="0.500" y="0.500" width="16" height="18" fill="#cc9a10" stroke="#444" />
                <rect x="0.500" y="0.500" width="3.500" height="18" fill="#e8e4d4" stroke="#444" />
              </svg>
              <span className="ml-[7px] text-[14.500px] font-bold text-black">Project*</span>
            </div>
            {rows.map((r, i) => <TreeRow key={i} r={r} idx={i} />)}
          </div>
        </div>
        <Details />
      </div>
      <div className="flex-1 min-w-0 ml-[5px] flex flex-col">
        <TopBar />
        <Viewport />
        <div className="h-[208px] pt-[5px] flex">
          <Graph />
          <Tabular />
        </div>
      </div>
    </div>
  );
}
